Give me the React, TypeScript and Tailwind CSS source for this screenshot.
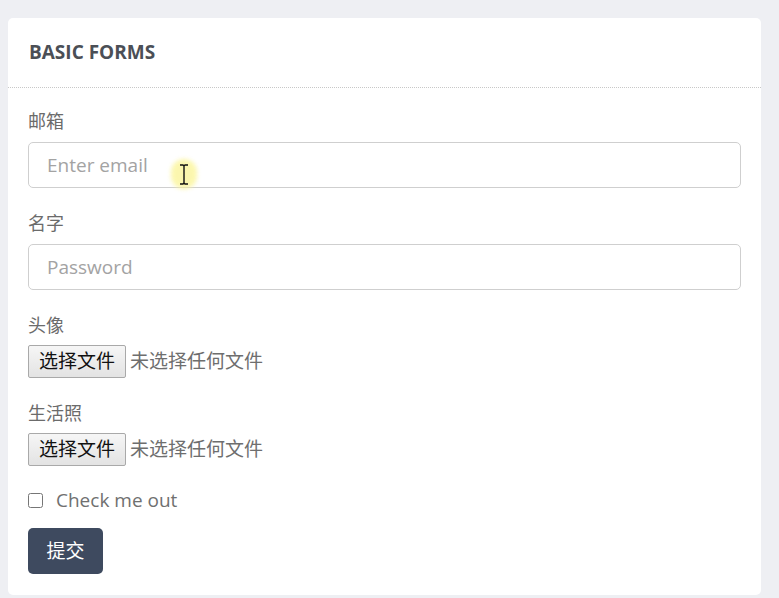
import React from 'react';

const sans = "font-['Open_Sans','Noto_Sans_CJK_SC',sans-serif]";

const FileField = ({ label }: { label: string }) => (
  <div className="mb-[22px]">
    <label className="block text-[18px] leading-[26px] text-[#6b6b6b] mb-[7px]">{label}</label>
    <div className="flex items-center">
      <button
        type="button"
        className="h-[33px] px-[10px] border border-[#a9a9a9] rounded-[2px] bg-gradient-to-b from-[#f6f6f6] to-[#e3e3e3] text-[19px] text-[#111] leading-none"
      >
        选择文件
      </button>
      <span className="ml-[4px] text-[19px] text-[#6e6e6e]">未选择任何文件</span>
    </div>
  </div>
);

const TextField = ({ label, placeholder }: { label: string; placeholder: string }) => (
  <div className="mb-[22px]">
    <label className="block text-[18px] leading-[26px] text-[#6b6b6b] mb-[8px]">{label}</label>
    <input
      type="text"
      placeholder={placeholder}
      className="block w-full h-[46px] px-[18px] border border-[#cfcfcf] rounded-[5px] text-[19px] text-[#555] placeholder:text-[#a3a3a3] outline-none bg-white"
    />
  </div>
);

export default function App() {
  return (
    <div className={`min-h-[598px] bg-[#eeeff3] pt-[18px] pl-[8px] pr-[18px] pb-[3px] ${sans}`}>
      <div className="relative bg-white rounded-[5px]">
        <div className="h-[70px] px-[21px] flex items-center border-b border-dotted border-[#c8c8c8]">
          <h2 className="text-[19px] font-bold text-[#4b4f56]">BASIC FORMS</h2>
        </div>
        <form className="px-5 pt-[20px] pb-[21px]">
          <TextField label="邮箱" placeholder="Enter email" />
          <TextField label="名字" placeholder="Password" />
          <FileField label="头像" />
          <FileField label="生活照" />
          <div className="flex items-center h-[24px] mb-[16px]">
            <input type="checkbox" className="w-[15px] h-[15px] m-0 accent-[#777]" />
            <span className="ml-[13px] text-[19px] text-[#707070]">Check me out</span>
          </div>
          <button
            type="button"
            className="h-[46px] w-[75px] rounded-[5px] bg-[#3e4a5f] text-white text-[19px]"
          >
            提交
          </button>
        </form>

        {/* screen-recorder cursor highlight */}
        <div className="absolute left-[163px] top-[141px] w-[26px] h-[30px] rounded-full bg-[#fbf59a] opacity-80 blur-[2px]" />
        <svg className="absolute left-[171px] top-[146px]" width="10" height="21" viewBox="0 0 10 21">
          <path d="M1 1h3l1 1 1-1h3M5 2v17M1 20h3l1-1 1 1h3" stroke="#111" strokeWidth="1.4" fill="none" />
        </svg>
      </div>
    </div>
  );
}
